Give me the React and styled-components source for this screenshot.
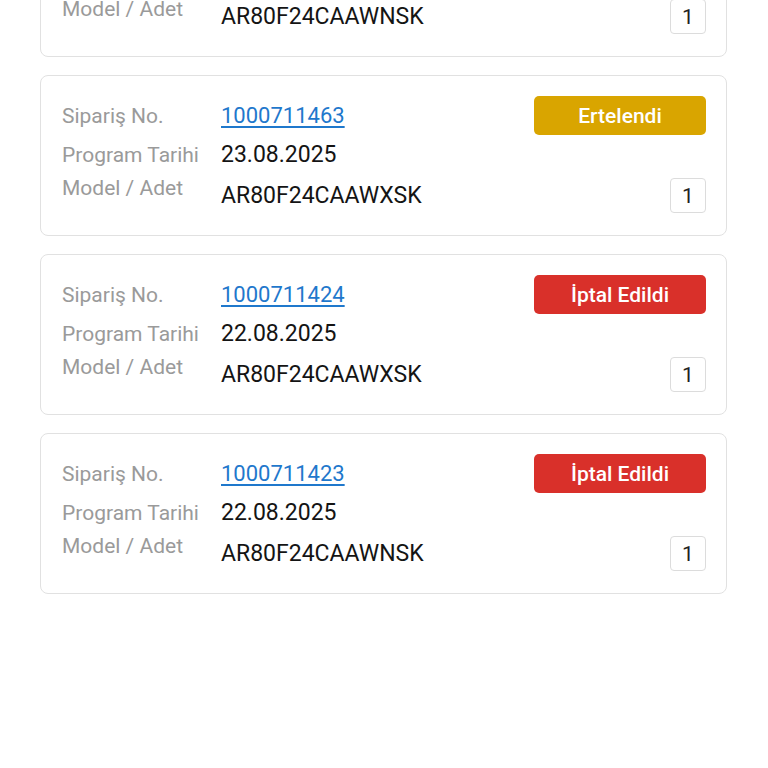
import React from "react";
import styled, { createGlobalStyle } from "styled-components";

const Global = createGlobalStyle`
  html, body { margin: 0; padding: 0; background: #ffffff; }
  body { font-family: Roboto, "Noto Sans", "Liberation Sans", sans-serif; overflow: hidden; }
`;

const Page = styled.div`
  width: 768px;
  height: 768px;
  overflow: hidden;
  background: #fff;
`;

const List = styled.div`
  display: flex;
  flex-direction: column;
  gap: 18px;
  padding: 0 41px 0 40px;
  margin-top: -104px;
`;

const Card = styled.div`
  box-sizing: border-box;
  height: 161px;
  border: 1px solid #e1e1e1;
  border-radius: 8px;
  padding: 20px 20px 22px 21px;
  display: grid;
  grid-template-columns: 159px 1fr auto;
  grid-template-rows: 39px 43px 35px;
`;

const Label = styled.div`
  font-size: 21px;
  color: #9a9a9a;
  align-self: ${(p) => (p.$top ? "start" : "center")};
  margin-top: ${(p) => (p.$top ? "-1px" : "0")};
  margin-bottom: ${(p) => (p.$lift ? "3px" : "0")};
  line-height: 22px;
`;

const Value = styled.div`
  font-size: 23px;
  color: #141414;
  line-height: 24px;
  align-self: center;
  margin-bottom: ${(p) => (p.$lift ? "3px" : "0")};
`;

const OrderLink = styled.a`
  font-size: 22px;
  color: #1f78cc;
  text-decoration: underline;
  text-underline-offset: 3px;
  line-height: 24px;
  align-self: center;
  justify-self: start;
`;

const Badge = styled.div`
  width: 172px;
  height: 39px;
  border-radius: 5px;
  background: ${(p) => (p.$status === "postponed" ? "#d9a500" : "#d9302a")};
  color: #fff;
  font-size: 21px;
  font-weight: 500;
  display: flex;
  align-items: center;
  justify-content: center;
`;

const Qty = styled.div`
  box-sizing: border-box;
  width: 36px;
  height: 35px;
  border: 1px solid #dcdcdc;
  border-radius: 4px;
  display: flex;
  align-items: center;
  justify-content: center;
  font-size: 21px;
  color: #222;
  justify-self: end;
  grid-column: 3;
`;

const orders = [
  { no: "1000711464", date: "23.08.2025", model: "AR80F24CAAWNSK", status: "postponed" },
  { no: "1000711463", date: "23.08.2025", model: "AR80F24CAAWXSK", status: "postponed" },
  { no: "1000711424", date: "22.08.2025", model: "AR80F24CAAWXSK", status: "cancelled" },
  { no: "1000711423", date: "22.08.2025", model: "AR80F24CAAWNSK", status: "cancelled" },
];

export default function App() {
  return (
    <Page>
      <Global />
      <List>
        {orders.map((o) => (
          <Card key={o.no}>
            <Label>Sipariş No.</Label>
            <OrderLink href="#">{o.no}</OrderLink>
            <Badge $status={o.status}>
              {o.status === "postponed" ? "Ertelendi" : "İptal Edildi"}
            </Badge>
            <Label $lift>Program Tarihi</Label>
            <Value $lift>{o.date}</Value>
            <div />
            <Label $top>Model / Adet</Label>
            <Value>{o.model}</Value>
            <Qty>1</Qty>
          </Card>
        ))}
      </List>
    </Page>
  );
}
